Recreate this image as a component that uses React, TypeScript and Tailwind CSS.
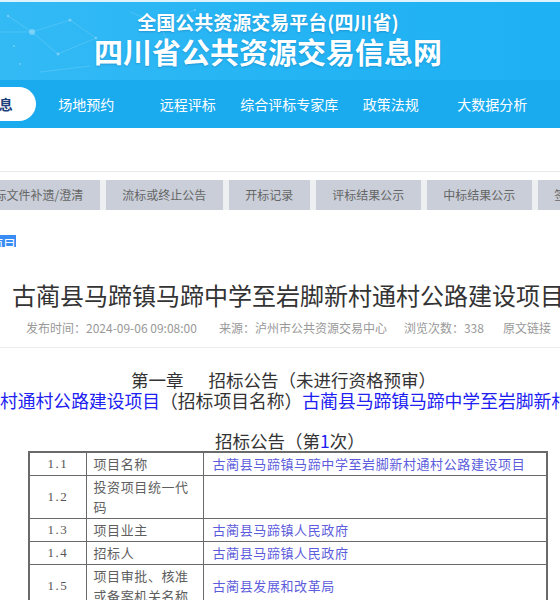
import React from "react";

const tabs = ["招标文件补遗/澄清", "流标或终止公告", "开标记录", "评标结果公示", "中标结果公示", "签约履行"];
const nav = ["场地预约", "远程评标", "综合评标专家库", "政策法规", "大数据分析"];

function Network() {
  return (
    <svg className="absolute left-0 top-0" width="260" height="80" viewBox="0 0 260 80" fill="none">
      <g stroke="#ffffff" strokeOpacity="0.18" strokeWidth="0.8">
        <line x1="8" y1="14" x2="32" y2="30" />
        <line x1="32" y1="30" x2="70" y2="18" />
        <line x1="32" y1="30" x2="58" y2="52" />
        <line x1="70" y1="18" x2="96" y2="36" />
        <line x1="58" y1="52" x2="96" y2="36" />
        <line x1="0" y1="30" x2="32" y2="30" />
        <line x1="130" y1="10" x2="160" y2="22" />
        <line x1="160" y1="22" x2="195" y2="8" />
        <line x1="160" y1="22" x2="172" y2="50" />
        <line x1="40" y1="70" x2="90" y2="64" />
      </g>
      <g fill="#ffffff" fillOpacity="0.3">
        <circle cx="32" cy="30" r="3" />
        <circle cx="8" cy="14" r="1.2" />
        <circle cx="70" cy="18" r="1.5" />
        <circle cx="58" cy="52" r="1.5" />
        <circle cx="96" cy="36" r="1.2" />
        <circle cx="160" cy="22" r="1.5" />
        <circle cx="195" cy="8" r="1" />
        <circle cx="172" cy="50" r="1" />
        <circle cx="14" cy="44" r="1" />
        <circle cx="20" cy="62" r="0.9" />
      </g>
    </svg>
  );
}

const rows: { n: string; label: string[]; value: string }[] = [
  { n: "1.1", label: ["项目名称"], value: "古蔺县马蹄镇马蹄中学至岩脚新村通村公路建设项目" },
  { n: "1.2", label: ["投资项目统一代", "码"], value: "" },
  { n: "1.3", label: ["项目业主"], value: "古蔺县马蹄镇人民政府" },
  { n: "1.4", label: ["招标人"], value: "古蔺县马蹄镇人民政府" },
  { n: "1.5", label: ["项目审批、核准", "或备案机关名称"], value: "古蔺县发展和改革局" },
];

export default function App() {
  return (
    <div className="w-[560px] h-[600px] overflow-hidden bg-white font-['Noto_Sans_CJK_SC',sans-serif]">
      {/* header */}
      <div className="relative h-[80px] border-t-2 border-[#dff3fd] bg-gradient-to-r from-[#33baf5] via-[#25b4f4] to-[#1eb1f3] overflow-hidden">
        <Network />
        <div className="relative flex flex-col items-center pr-[24px] pt-[9px] text-white [text-shadow:0_1px_2px_rgba(0,60,120,0.25)]">
          <div className="text-[19px] font-bold leading-[22px]">全国公共资源交易平台(四川省)</div>
          <div className="mt-[1px] text-[29px] font-bold leading-[34px]">四川省公共资源交易信息网</div>
        </div>
      </div>
      {/* nav */}
      <div className="flex h-[48px] items-center bg-[#1aabef] overflow-hidden">
        <div className="ml-[-66px] flex shrink-0 items-center">
          <div className="h-[34px] w-[101.5px] shrink-0 rounded-full bg-white text-center text-[14px] font-bold leading-[34px] text-[#1d3f7c]">
            交易信息
          </div>
          {nav.map((t) => (
            <div key={t} className="w-[101.5px] shrink-0 whitespace-nowrap text-center text-[14px] leading-[34px] text-white">
              {t}
            </div>
          ))}
        </div>
      </div>
      <div className="h-[44px] border-b border-[#e9e9e9]" />
      {/* tabs */}
      <div className="pt-[8px] overflow-hidden">
        <div className="ml-[-34px] flex h-[30px] w-max gap-[6px] bg-[#eeeff1]">
          {tabs.map((t) => (
            <div key={t} className="h-[30px] shrink-0 whitespace-nowrap bg-[#c9ced8] px-[16.5px] text-[12px] leading-[30px] text-[#666]">
              {t}
            </div>
          ))}
        </div>
      </div>
      {/* breadcrumb */}
      <div className="mt-[20px] h-[17px] overflow-hidden">
        <span className="ml-[-10px] inline-block bg-[#3a8cf5] text-[13px] leading-[17px] text-white">项目</span>
      </div>
      {/* title */}
      <div className="mt-[33px] whitespace-nowrap pl-[12px] text-[24px] leading-[30px] text-[#333]">
        古蔺县马蹄镇马蹄中学至岩脚新村通村公路建设项目
      </div>
      <div className="mt-[9px] flex whitespace-nowrap border-b border-[#ececec] pb-[10px] pl-[26px] text-[12px] leading-[18px] text-[#999]">
        <span>发布时间：2024-09-06 09:08:00</span>
        <span className="ml-[22px]">来源：泸州市公共资源交易中心</span>
        <span className="ml-[17px]">浏览次数：338</span>
        <span className="ml-[19px]">原文链接</span>
      </div>
      {/* content */}
      <div className="mt-[21px] whitespace-nowrap pl-[131px] text-[17.5px] leading-[21px] text-[#333]">
        第一章<span className="ml-[25px]">招标公告（未进行资格预审）</span>
      </div>
      <div className="whitespace-nowrap text-[17.8px] leading-[21px] text-[#333]">
        <span className="text-[#2020f2]">村通村公路建设项目</span>（招标项目名称）
        <span className="text-[#2020f2]">古蔺县马蹄镇马蹄中学至岩脚新村通村公路建设项目</span>
      </div>
      <div className="mt-[19px] whitespace-nowrap pl-[215px] text-[17.5px] leading-[21px] text-[#333]">
        招标公告（第<span className="text-[#2020f2]">1</span>次）
      </div>
      <table className="ml-[28px] mt-[-0.5px] w-[520px] table-fixed border-collapse border-2 border-[#6a6a6a]">
        <colgroup>
          <col className="w-[57px]" />
          <col className="w-[117px]" />
          <col />
        </colgroup>
        <tbody>
          {rows.map((r) => (
            <tr key={r.n}>
              <td className="border border-[#6a6a6a] text-center align-middle font-['Liberation_Serif',serif] text-[13px] leading-[20px] tracking-[1.5px] text-[#555]">
                {r.n}
              </td>
              <td className="border border-[#6a6a6a] px-[7px] py-px align-middle text-[13px] leading-[20px] tracking-[0.6px] text-[#5e5e5e]">
                {r.label.map((l) => (
                  <div key={l}>{l}</div>
                ))}
              </td>
              <td className="border border-[#6a6a6a] px-[9px] py-px align-middle whitespace-nowrap text-[13px] leading-[20px] tracking-[0.6px] text-[#5c5cdc]">
                {r.value}
              </td>
            </tr>
          ))}
        </tbody>
      </table>
    </div>
  );
}
